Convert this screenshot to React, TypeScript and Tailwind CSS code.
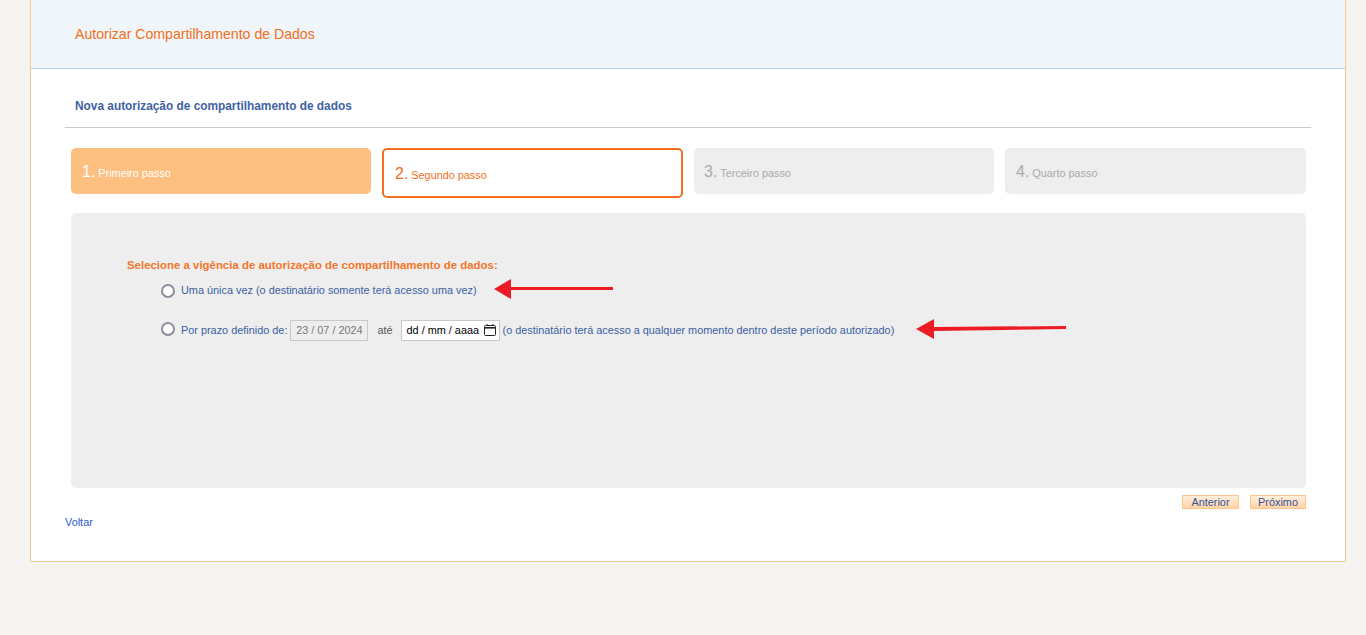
const font = '[font-family:"Liberation_Sans",Arial,sans-serif]';

const steps = [
  { n: '1.', label: 'Primeiro passo', box: 'w-[300px] h-[46px] bg-[#fec080] text-white', pad: 'pt-[14px] pl-[11px]' },
  { n: '2.', label: 'Segundo passo', box: 'w-[301px] h-[50px] bg-white border-2 border-[#f26f21] text-[#f26f21]', pad: 'pt-[14px] pl-[11px]' },
  { n: '3.', label: 'Terceiro passo', box: 'w-[300px] h-[46px] bg-[#eeeeee] text-[#aaaaaa]', pad: 'pt-[14px] pl-[10px]' },
  { n: '4.', label: 'Quarto passo', box: 'w-[301px] h-[46px] bg-[#eeeeee] text-[#aaaaaa]', pad: 'pt-[14px] pl-[11px]' },
];

function Radio({ className = '' }: { className?: string }) {
  return <span className={`block w-[14px] h-[14px] shrink-0 rounded-full bg-white border-2 border-[#8d8d9f] ${className}`} />;
}

export default function App() {
  return (
    <div className={`${font} min-h-[635px] bg-[#f5f4f0] pl-[30px] pr-[20px]`}>
      <div className="w-[1316px] h-[562px] bg-white border-x border-b border-[#fdc68a]">
        <div className="h-[69px] bg-[#f0f5f9] border-b border-[#bcd8ec] pl-[44px] pt-[25px] text-[14.1px] leading-[18px] text-[#f26f21]">
          Autorizar Compartilhamento de Dados
        </div>

        <div className="pl-[34px] pr-[34px]">
          <div className="h-[59px] border-b border-[#cfcac4] pl-[10px] pt-[30px] text-[11.87px] leading-[14px] font-bold text-[#3f62a3]">
            Nova autorização de compartilhamento de dados
          </div>

          <div className="flex gap-[11px] items-start pl-[6px] pr-[5px] pt-[20px] h-[85px]">
            {steps.map((s) => (
              <div key={s.n} className={`rounded-[5px] ${s.box} ${s.pad}`}>
                <div className="flex items-baseline leading-[20px]">
                  <span className="text-[16px]">{s.n}</span>
                  <span className="text-[10.85px] ml-[3px]">{s.label}</span>
                </div>
              </div>
            ))}
          </div>

          <div className="relative mx-[6px] mr-[5px] h-[275px] bg-[#eeeeee] rounded-[5px] pl-[56px] pt-[45px]">
            <div className="text-[11.43px] leading-[14px] font-bold text-[#f4762a]">
              Selecione a vigência de autorização de compartilhamento de dados:
            </div>

            <div className="flex items-center gap-[6px] ml-[34px] mt-[8px] h-[20px] text-[10.88px] text-[#3a5fa3]">
              <Radio className="relative top-[1px]" />
              <span>Uma única vez (o destinatário somente terá acesso uma vez)</span>
            </div>

            <div className="flex items-center ml-[34px] mt-[19px] h-[20px] text-[10.88px] text-[#3a5fa3]">
              <Radio />
              <span className="ml-[6px] relative top-[1px]">Por prazo definido de:</span>
              <span className="ml-[3px] w-[78px] h-[21px] flex items-center justify-center border border-[#c8c8c8] text-[#777777] relative top-[1px]">
                23 / 07 / 2024
              </span>
              <span className="ml-[9px] text-[#555555] relative top-[1px]">até</span>
              <span className="ml-[8px] w-[99px] h-[21px] flex items-center bg-white border border-[#c8c8c8] pl-[5px] text-black relative top-[1px]">
                dd / mm / aaaa
                <svg className="ml-[4px]" width="14" height="14" viewBox="0 0 14 14" fill="none" stroke="#222222">
                  <rect x="1.5" y="2.5" width="11" height="10" rx="1" />
                  <path d="M1.5 4.8h11" strokeWidth="1.6" />
                  <path d="M4 1v2M10 1v2" />
                </svg>
              </span>
              <span className="ml-[3px] relative top-[1px]">(o destinatário terá acesso a qualquer momento dentro deste período autorizado)</span>
            </div>

            <svg className="absolute left-[423px] top-[65px]" width="119" height="22" viewBox="0 0 119 22">
              <path d="M0 11 L17 1 L17 9 L119 9 L119 12 L17 12 L17 21 Z" fill="#ed1c24" />
            </svg>
            <svg className="absolute left-[845px] top-[105px]" width="150" height="22" viewBox="0 0 150 22">
              <path d="M0 11 L18 1 L18 9 L150 8 L150 11 L18 13 L18 21 Z" fill="#ed1c24" />
            </svg>
          </div>

          <div className="flex justify-end gap-[11px] pr-[5px] pt-[7px]">
            <button className="w-[57px] h-[14px] flex items-center justify-center border border-[#fdc68a] bg-gradient-to-b from-[#ffeedd] to-[#ffd3a6] text-[10.88px] text-[#34549a]">
              Anterior
            </button>
            <button className="w-[56px] h-[14px] flex items-center justify-center border border-[#fdc68a] bg-gradient-to-b from-[#ffeedd] to-[#ffd3a6] text-[10.88px] text-[#34549a]">
              Próximo
            </button>
          </div>

          <a className="block mt-[6px] text-[10.88px] leading-[14px] text-[#2a5bc8]">Voltar</a>
        </div>
      </div>
    </div>
  );
}
